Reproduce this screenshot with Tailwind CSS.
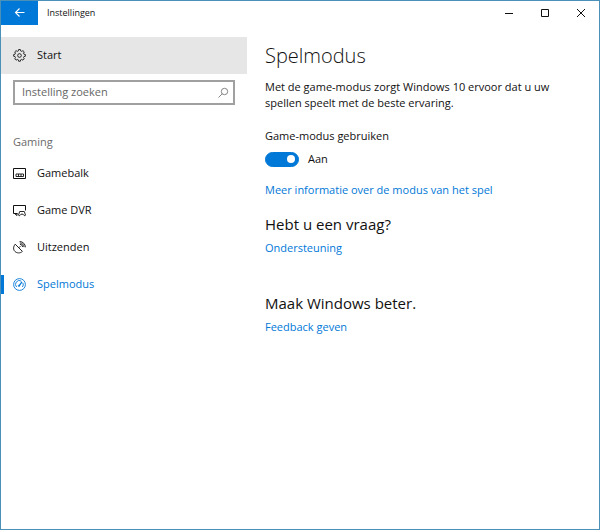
<!DOCTYPE html>
<html lang="nl">
<head>
  <meta charset="UTF-8">
  <meta name="viewport" content="width=device-width, initial-scale=1.0">
  <title>Instellingen</title>
  <script src="https://cdn.jsdelivr.net/npm/@tailwindcss/browser@4"></script>
</head>
<body class="flex min-h-screen flex-col border border-[#4a90b8] bg-white font-['Open_Sans','Noto_Sans',sans-serif] text-[11px] text-[#111]">

  <!-- Title bar -->
  <header class="flex h-6 items-stretch">
    <button type="button" aria-label="Terug" class="flex w-[37px] items-center justify-center bg-[#0078d7] text-white">
      <svg class="h-3 w-3" viewBox="0 0 12 12" fill="none" stroke="currentColor" stroke-width="1.1"><path d="M10.500 5.500H2M5.500 1.500L1.500 5.500L5.500 9.500"/></svg>
    </button>
    <span class="flex-1 self-center pl-[9px] text-[9px]">Instellingen</span>
    <button type="button" aria-label="Minimaliseren" class="flex w-9 items-center justify-center">
      <svg class="h-[10px] w-[10px]" viewBox="0 0 10 10" fill="none" stroke="currentColor"><path d="M1 5.500h8"/></svg>
    </button>
    <button type="button" aria-label="Maximaliseren" class="flex w-9 items-center justify-center">
      <svg class="h-[10px] w-[10px]" viewBox="0 0 10 10" fill="none" stroke="currentColor"><path d="M1.500 1.500h7v7h-7z"/></svg>
    </button>
    <button type="button" aria-label="Sluiten" class="flex w-9 items-center justify-center">
      <svg class="h-[10px] w-[10px]" viewBox="0 0 10 10" fill="none" stroke="currentColor"><path d="M1 1l8 8M9 1L1 9"/></svg>
    </button>
  </header>

  <div class="flex flex-1 pt-3">

    <!-- Sidebar -->
    <aside class="w-[246px] shrink-0">
      <a href="#" class="flex h-[37px] items-center gap-[11px] bg-[#e6e6e6] pl-3">
        <svg class="h-[13px] w-[13px]" viewBox="0 0 12 12" fill="none" stroke="currentColor" stroke-width="0.800" stroke-linejoin="round">
          <path d="M5.200 0.500h1.600l.3 1.300 .9.400 1.200-.7 1.200 1.200-.7 1.200.4.900 1.300.3v1.600l-1.300.3-.4.900.7 1.200-1.200 1.200-1.200-.7-.9.400-.3 1.300H5.200l-.3-1.300-.9-.4-1.200.7-1.200-1.200.7-1.200-.4-.9-1.300-.3V5.100l1.300-.3.4-.9-.7-1.200 1.200-1.200 1.200.7.9-.4z"/>
          <circle cx="6" cy="6" r="1.700"/>
        </svg>
        <span>Start</span>
      </a>

      <form class="mx-3 mt-[6px] flex h-[25px] items-center border-2 border-[#a0a0a0] pr-1">
        <input type="search" aria-label="Instelling zoeken" placeholder="Instelling zoeken" class="min-w-0 flex-1 pl-[7px] outline-none placeholder:text-[#666]">
        <button type="submit" aria-label="Zoeken" class="text-[#777]">
          <svg class="h-3 w-3" viewBox="0 0 12 12" fill="none" stroke="currentColor" stroke-width="0.900"><circle cx="7.500" cy="4.500" r="3.200"/><path d="M5.200 6.800L1.500 10.500"/></svg>
        </button>
      </form>

      <h2 class="mt-[27px] pl-3 leading-5 text-[#6b6b6b]">Gaming</h2>

      <nav class="mt-[3px]">
        <a href="#" class="flex h-[37px] items-center gap-[11px] pl-3">
          <svg class="h-[13px] w-[13px]" viewBox="0 0 13 13" fill="none" stroke="currentColor"><path d="M.5 1.500h12v10H.5z"/><path d="M3 7h7.500v2.500H3zM5.500 7v2.500M8 7v2.500" stroke-width="0.900"/></svg>
          <span>Gamebalk</span>
        </a>
        <a href="#" class="flex h-[37px] items-center gap-[11px] pl-3">
          <svg class="h-[13px] w-[13px]" viewBox="0 0 13 13" fill="none" stroke="currentColor">
            <path d="M4.500 9.500h-4v-8h12v5M1.500 9.500l2.500 2v-2"/>
            <path d="M6.700 7.500h4.600l1.200 3.600q-.5 1.200-1.400.4L10 10.200H8l-1.100 1.300q-.9.800-1.400-.4z" stroke-width="0.900"/>
          </svg>
          <span>Game DVR</span>
        </a>
        <a href="#" class="flex h-[37px] items-center gap-[11px] pl-3">
          <svg class="h-[13px] w-[13px]" viewBox="0 0 13 13" fill="none" stroke="currentColor" stroke-width="0.900">
            <path d="M2.200 3.200l7.200 7.200C7.200 12.500 4 12.300 2 10.500S.2 5.600 2.200 3.200zM5.800 6.800l1.700-1.700"/>
            <path d="M7 3.300A2.700 2.700 0 0 1 9.600 6M6.800 1.900A4.200 4.200 0 0 1 11 6.100M6.600.5A5.800 5.800 0 0 1 12.400 6.300"/>
          </svg>
          <span>Uitzenden</span>
        </a>
        <a href="#" aria-current="page" class="relative flex h-[37px] items-center gap-[11px] pl-3 text-[#0078d7]">
          <span class="absolute left-0 h-[19px] w-[3px] bg-[#0078d7]"></span>
          <svg class="h-[13px] w-[13px]" viewBox="0 0 13 13" fill="none" stroke="currentColor" stroke-width="0.900">
            <circle cx="6.500" cy="6.500" r="5.900"/>
            <path d="M3.600 9A3.800 3.800 0 0 1 8.300 3.100M9.900 4.900A3.800 3.800 0 0 1 9.400 9"/>
            <path d="M6 7.800L9 3.800" stroke-width="1.200"/>
            <circle cx="6" cy="7.800" r=".7"/>
          </svg>
          <span>Spelmodus</span>
        </a>
      </nav>
    </aside>

    <!-- Content -->
    <main class="min-w-0 flex-1 pt-1 pr-9 pl-[18px]">
      <h1 class="text-[20px] leading-[30px] font-light">Spelmodus</h1>
      <p class="mt-2 leading-4">Met de game-modus zorgt Windows 10 ervoor dat u uw spellen speelt met de beste ervaring.</p>

      <label for="gameMode" class="mt-[15px] block leading-5">Game-modus gebruiken</label>
      <div class="mt-[3px] flex h-5 items-center gap-[9px]">
        <span class="relative flex h-[15px] w-[34px] items-center">
          <input type="checkbox" role="switch" id="gameMode" checked class="peer h-[15px] w-[34px] appearance-none rounded-full border border-[#333] checked:border-[#0078d7] checked:bg-[#0078d7]">
          <span class="pointer-events-none absolute left-1 h-2 w-2 rounded-full bg-[#333] peer-checked:left-[22px] peer-checked:bg-white"></span>
        </span>
        <span>Aan</span>
      </div>

      <a href="#" class="mt-[11px] block leading-5 text-[#0078d7]">Meer informatie over de modus van het spel</a>

      <h2 class="mt-3 text-[15px] leading-6">Hebt u een vraag?</h2>
      <a href="#" class="mt-[2px] block leading-5 text-[#0078d7]">Ondersteuning</a>

      <h2 class="mt-[33px] text-[15px] leading-6">Maak Windows beter.</h2>
      <a href="#" class="mt-[2px] block leading-5 text-[#0078d7]">Feedback geven</a>
    </main>
  </div>

</body>
</html>
